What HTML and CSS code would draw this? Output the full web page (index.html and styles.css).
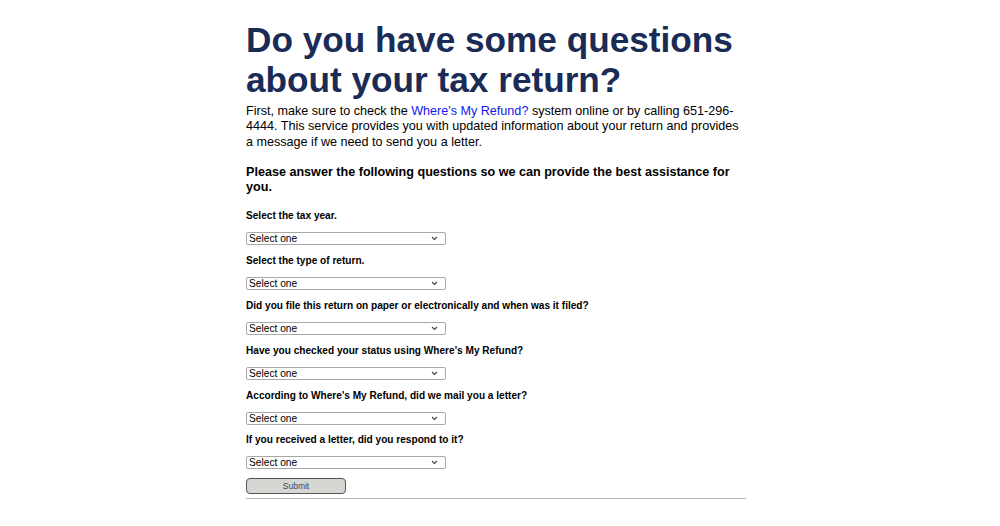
FILE: index.html
```html
<!DOCTYPE html>
<html lang="en">
<head>
<meta charset="utf-8">
<title>Tax return questions</title>
<link rel="stylesheet" href="styles.css">
</head>
<body>
<main class="page">
  <h1 class="title">Do you have some questions about your tax return?</h1>
  <p class="intro">First, make sure to check the <a class="link" href="#">Where's My Refund?</a> system online or by calling 651-296-4444. This service provides you with updated information about your return and provides a message if we need to send you a letter.</p>
  <h3 class="lead">Please answer the following questions so we can provide the best assistance for you.</h3>
  <form class="form">
    <div class="field">
      <label class="label">Select the tax year.</label>
      <div class="select-wrap">
        <select class="select"><option>Select one</option></select>
        <svg class="chev" width="7" height="5" viewBox="0 0 7 5"><path d="M1 1 L3.5 3.5 L6 1" fill="none" stroke="#444" stroke-width="1.1"/></svg>
      </div>
    </div>
    <div class="field">
      <label class="label">Select the type of return.</label>
      <div class="select-wrap">
        <select class="select"><option>Select one</option></select>
        <svg class="chev" width="7" height="5" viewBox="0 0 7 5"><path d="M1 1 L3.5 3.5 L6 1" fill="none" stroke="#444" stroke-width="1.1"/></svg>
      </div>
    </div>
    <div class="field">
      <label class="label">Did you file this return on paper or electronically and when was it filed?</label>
      <div class="select-wrap">
        <select class="select"><option>Select one</option></select>
        <svg class="chev" width="7" height="5" viewBox="0 0 7 5"><path d="M1 1 L3.5 3.5 L6 1" fill="none" stroke="#444" stroke-width="1.1"/></svg>
      </div>
    </div>
    <div class="field">
      <label class="label">Have you checked your status using Where's My Refund?</label>
      <div class="select-wrap">
        <select class="select"><option>Select one</option></select>
        <svg class="chev" width="7" height="5" viewBox="0 0 7 5"><path d="M1 1 L3.5 3.5 L6 1" fill="none" stroke="#444" stroke-width="1.1"/></svg>
      </div>
    </div>
    <div class="field">
      <label class="label">According to Where's My Refund, did we mail you a letter?</label>
      <div class="select-wrap">
        <select class="select"><option>Select one</option></select>
        <svg class="chev" width="7" height="5" viewBox="0 0 7 5"><path d="M1 1 L3.5 3.5 L6 1" fill="none" stroke="#444" stroke-width="1.1"/></svg>
      </div>
    </div>
    <div class="field">
      <label class="label">If you received a letter, did you respond to it?</label>
      <div class="select-wrap">
        <select class="select"><option>Select one</option></select>
        <svg class="chev" width="7" height="5" viewBox="0 0 7 5"><path d="M1 1 L3.5 3.5 L6 1" fill="none" stroke="#444" stroke-width="1.1"/></svg>
      </div>
    </div>
    <button class="submit" type="button">Submit</button>
  </form>
  <hr class="rule">
</main>
</body>
</html>
```

FILE: styles.css
```css
html, body {
  margin: 0;
  padding: 0;
  background: #fff;
}

body {
  font-family: "Liberation Sans", Arial, sans-serif;
  color: #000;
}

.page {
  width: 500px;
  margin: 0 0 0 246px;
  padding-top: 20px;
  display: flex;
  flex-direction: column;
}

.title {
  margin: 0;
  font-size: 35.2px;
  line-height: 40.4px;
  font-weight: 700;
  color: #1a2b56;
}

.intro {
  margin: 3px 0 0;
  font-size: 12.6px;
  line-height: 15.5px;
}

.link {
  color: #1515f0;
  text-decoration: none;
}

.lead {
  margin: 15px 0 0;
  font-size: 12.6px;
  line-height: 15px;
  font-weight: 700;
}

.form {
  margin-top: 15px;
  display: flex;
  flex-direction: column;
  align-items: flex-start;
}

.field {
  display: flex;
  flex-direction: column;
  align-items: flex-start;
  gap: 10px;
  margin-bottom: 9.8px;
}

.field:last-of-type {
  margin-bottom: 8.6px;
}

.label {
  font-size: 10.1px;
  line-height: 12px;
  font-weight: 700;
}

.select-wrap {
  position: relative;
  width: 200px;
  height: 13px;
}

.select {
  appearance: none;
  -webkit-appearance: none;
  display: block;
  width: 200px;
  height: 13px;
  margin: 0;
  padding: 0 0 0 2px;
  border: 1px solid #a9a9a9;
  border-radius: 2px;
  background: #fff;
  font-family: "Liberation Sans", Arial, sans-serif;
  font-size: 10.2px;
  line-height: 11px;
  color: #000;
}

.chev {
  position: absolute;
  right: 8px;
  top: 4px;
  pointer-events: none;
}

.submit {
  width: 100px;
  height: 16px;
  margin: 0;
  padding: 0;
  border: 1px solid #555;
  border-radius: 4px;
  background: #d6d6d2;
  font-family: "Liberation Sans", Arial, sans-serif;
  font-size: 8.5px;
  color: #3a4560;
}

.rule {
  width: 100%;
  margin: 4px 0 0;
  border: 0;
  border-top: 1px solid #b8b8b8;
  height: 0;
}
```
